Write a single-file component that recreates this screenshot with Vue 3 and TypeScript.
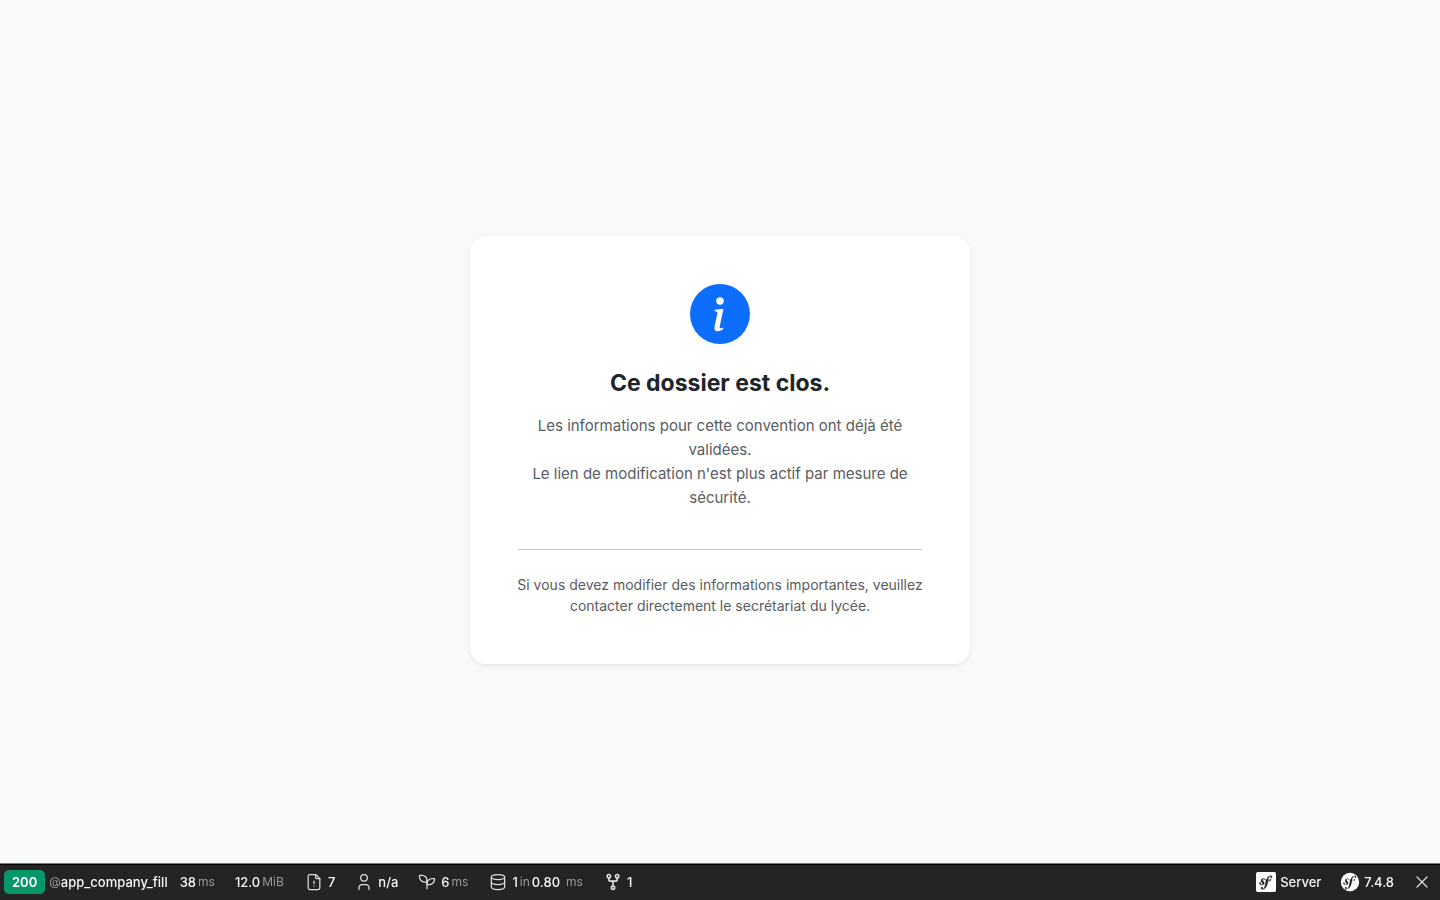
<script setup lang="ts">
interface Block {
  id: string
  icon?: string[]
  parts: { text: string; muted?: boolean }[]
}

const blocks: Block[] = [
  { id: 'time', parts: [{ text: '38' }, { text: 'ms', muted: true }] },
  { id: 'memory', parts: [{ text: '12.0' }, { text: 'MiB', muted: true }] },
  {
    id: 'deprecations',
    icon: [
      'M14 3v4a1 1 0 0 0 1 1h4',
      'M17 21H7a2 2 0 0 1-2-2V5a2 2 0 0 1 2-2h7l5 5v11a2 2 0 0 1-2 2z',
      'M12 17v.01',
      'M12 11v3',
    ],
    parts: [{ text: '7' }],
  },
  {
    id: 'security',
    icon: ['M8 7a4 4 0 1 0 8 0a4 4 0 0 0-8 0', 'M6 21v-2a4 4 0 0 1 4-4h4a4 4 0 0 1 4 4v2'],
    parts: [{ text: 'n/a' }],
  },
  {
    id: 'twig',
    icon: ['M12 10a6 6 0 0 0-6-6H3v2a6 6 0 0 0 6 6h3', 'M12 14a6 6 0 0 1 6-6h3v1a6 6 0 0 1-6 6h-3', 'M12 20V10'],
    parts: [{ text: '6' }, { text: 'ms', muted: true }],
  },
  {
    id: 'database',
    icon: [
      'M4 6a8 3 0 1 0 16 0a8 3 0 1 0-16 0',
      'M4 6v6a8 3 0 0 0 16 0V6',
      'M4 12v6a8 3 0 0 0 16 0v-6',
    ],
    parts: [{ text: '1' }, { text: 'in', muted: true }, { text: '0.80' }, { text: 'ms', muted: true }],
  },
  {
    id: 'workflow',
    icon: [
      'M10 19a2 2 0 1 0 4 0a2 2 0 1 0-4 0',
      'M5 5a2 2 0 1 0 4 0a2 2 0 1 0-4 0',
      'M15 5a2 2 0 1 0 4 0a2 2 0 1 0-4 0',
      'M7 7v2a2 2 0 0 0 2 2h6a2 2 0 0 0 2-2V7',
      'M12 11v6',
    ],
    parts: [{ text: '1' }],
  },
]

const sfGlyph =
  'M17.247 4.64c-1.22.042-2.283.715-3.075 1.644-.878 1.02-1.461 2.229-1.881 3.461-.753-.614-1.332-1.414-2.539-1.761-.966-.297-2.015-.105-2.813.514-.41.319-.71.757-.861 1.254-.36 1.176.381 2.225.719 2.6l.737.79c.15.154.519.56.339 1.138-.193.631-.951 1.037-1.732.799-.348-.106-.848-.366-.734-.73.045-.15.152-.263.21-.391.052-.11.077-.194.095-.242.141-.465-.053-1.07-.551-1.223-.465-.143-.939-.03-1.125.566-.209.68.117 1.913 1.86 2.449 2.04.628 3.765-.484 4.009-1.932.153-.907-.255-1.582-1.006-2.447l-.612-.677c-.371-.37-.497-1.002-.114-1.485.324-.409.785-.584 1.539-.379 1.103.3 1.594 1.063 2.412 1.68-.338 1.11-.56 2.223-.759 3.222l-.123.746c-.585 3.07-1.033 4.757-2.194 5.726-.234.166-.57.416-1.073.434-.266.005-.352-.176-.355-.257-.006-.184.15-.268.255-.353.155-.083.392-.224.374-.674-.016-.532-.456-.994-1.094-.973-.477.017-1.203.465-1.176 1.286.028.85.819 1.485 2.012 1.444.638-.021 2.062-.281 3.464-1.949 1.633-1.911 2.09-4.101 2.434-5.706l.383-2.117c.213.024.441.042.69.048 2.032.044 3.049-1.01 3.064-1.776.01-.464-.304-.921-.744-.91-.314.009-.708.217-.803.652-.092.427.646.813.068 1.188-.41.266-1.146.452-2.184.301l.188-1.042c.386-1.976.859-4.407 2.661-4.467.132-.007.612.006.623.323.003.105-.022.134-.147.375-.115.155-.174.345-.168.537.017.504.4.836.957.816.743-.023.955-.748.945-1.119-.032-.874-.952-1.424-2.17-1.386z'
</script>

<template>
  <main class="page">
    <section class="card">
      <svg class="info" viewBox="0 0 16 16" aria-hidden="true">
        <path
          d="M8 16A8 8 0 1 0 8 0a8 8 0 0 0 0 16m.93-9.412-1 4.705c-.07.34.029.533.304.533.194 0 .487-.07.686-.246l-.088.416c-.287.346-.92.598-1.465.598-.703 0-1.002-.422-.808-1.319l.738-3.468c.064-.293.006-.399-.287-.47l-.451-.081.082-.381 2.29-.287zM8 5.5a1 1 0 1 1 0-2 1 1 0 0 1 0 2"
        />
      </svg>
      <h1>Ce dossier est clos.</h1>
      <p class="lead">
        Les informations pour cette convention ont déjà été<br />validées.<br />
        Le lien de modification n'est plus actif par mesure de<br />sécurité.
      </p>
      <hr />
      <p class="note">
        Si vous devez modifier des informations importantes, veuillez contacter directement le
        secrétariat du lycée.
      </p>
    </section>
  </main>

  <footer class="toolbar">
    <a class="request" href="#">
      <span class="status">200</span>
      <span class="route"><span class="muted">@</span>app_company_fill</span>
    </a>
    <a v-for="b in blocks" :key="b.id" class="block" :class="b.id" href="#">
      <svg v-if="b.icon" class="icon" viewBox="0 0 24 24" aria-hidden="true">
        <path v-for="d in b.icon" :key="d" :d="d" />
      </svg>
      <span class="value">
        <span v-for="(p, i) in b.parts" :key="i" :class="{ muted: p.muted }">{{ p.text }}</span>
      </span>
    </a>
    <a class="block server" href="#">
      <svg class="brand" viewBox="0 0 24 24" aria-hidden="true">
        <rect width="24" height="24" rx="2" fill="#fff" />
        <path :d="sfGlyph" fill="#222" stroke="#222" stroke-width="0.4" />
      </svg>
      <span>Server</span>
    </a>
    <a class="block version" href="#">
      <svg class="brand" viewBox="0 0 24 24" aria-hidden="true">
        <circle cx="12" cy="12" r="11" fill="#fff" />
        <path :d="sfGlyph" fill="#222" />
      </svg>
      <span>7.4.8</span>
    </a>
    <button class="close" type="button" aria-label="Close toolbar">
      <svg class="icon" viewBox="0 0 24 24" aria-hidden="true"><path d="M18 6 6 18M6 6l12 12" /></svg>
    </button>
  </footer>
</template>

<style>
body {
  margin: 0;
  background: #f8f9fb;
}
</style>

<style scoped>
.page {
  box-sizing: border-box;
  min-height: 100vh;
  display: flex;
  align-items: center;
  justify-content: center;
  font-family: Inter, 'Liberation Sans', sans-serif;
  color: #212529;
}
.card {
  box-sizing: border-box;
  width: 100%;
  max-width: 500px;
  padding: 48px;
  border-radius: 16px;
  background: #fff;
  box-shadow: 0 2px 4px rgba(0, 0, 0, 0.075);
  text-align: center;
}
.info {
  display: block;
  width: 60px;
  height: 60px;
  margin: 0 auto 24px;
  fill: #0d6efd;
}
h1 {
  margin: 0 0 15px;
  font-size: 23px;
  line-height: 31px;
  font-weight: 700;
}
.lead {
  margin: 0;
  font-size: 15px;
  line-height: 24px;
  color: #595c5f;
}
hr {
  margin: 39px 0 24px;
  border: 0;
  border-top: 1px solid #c7c8c9;
}
.note {
  margin: 0 -4px;
  font-size: 14px;
  line-height: 21px;
  color: #595c5f;
}
.toolbar {
  position: fixed;
  left: 0;
  right: 0;
  bottom: 0;
  box-sizing: border-box;
  height: 36px;
  padding-bottom: 2px;
  display: flex;
  align-items: center;
  border-top: 1px solid #000;
  box-shadow: 0 -1px 0 rgba(0, 0, 0, 0.5);
  background: #242424;
  color: #f5f5f5;
  font: 500 13px/20px Inter, 'Liberation Sans', sans-serif;
  white-space: nowrap;
}
a {
  color: inherit;
  text-decoration: none;
}
.request,
.block,
.value,
.route {
  display: flex;
  align-items: center;
}
.request {
  gap: 4px;
  padding: 0 2px 0 4px;
}
.status {
  padding: 2px 8px;
  border-radius: 5px;
  background: #059669;
  color: #fff;
  font-weight: 600;
}
.block {
  gap: 4px;
  padding: 0 10px;
}
.deprecations,
.security {
  padding-right: 9px;
}
.value {
  gap: 2px;
}
.database .muted:last-child {
  padding-left: 4px;
}
.muted {
  color: #999;
  font-size: 12px;
  font-weight: 400;
}
.icon {
  width: 20px;
  height: 20px;
  fill: none;
  stroke: #ddd;
  stroke-width: 1.5;
  stroke-linecap: round;
  stroke-linejoin: round;
}
.workflow .icon {
  stroke-width: 2;
}
.brand {
  width: 20px;
  height: 20px;
}
.server {
  margin-left: auto;
  padding-right: 9px;
}
.close {
  display: flex;
  margin: 0;
  padding: 0 8px;
  border: 0;
  background: none;
}
</style>
